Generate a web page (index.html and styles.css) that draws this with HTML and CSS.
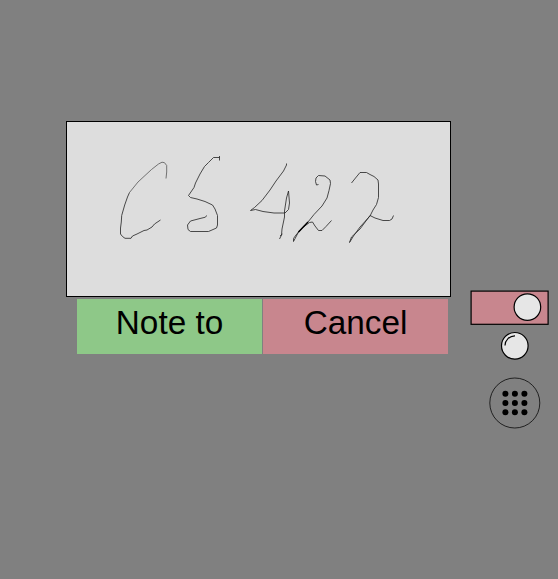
FILE: index.html
```html
<!DOCTYPE html>
<html lang="en">
<head>
<meta charset="utf-8">
<title>Handwritten note</title>
<link rel="stylesheet" href="styles.css">
</head>
<body>
<main class="screen">
  <section class="note">
    <div class="pad">
      <svg class="ink" viewBox="67 122 383 174">
        <path class="faint" d="M166 178.500L166.700 172V165.500L164.500 162.700L162 162.200L158.500 164L151.500 169.500L138 182L129.500 192.500"/>
        <path d="M129.500 192.500L127.500 197L124.700 205L121.700 215.500L121.300 222L120.500 228V234L122.500 236.500L125 238.300H131L132.500 236L137 234L144 230.500L147 230L152 227L154.500 224L160.500 220"/>
        <path d="M219.500 156V160.500M219.500 157.500H213.500L208.500 162.500L204.500 166.500L200 174L195.500 183L194 187.500L188.500 195.500L190.500 197.500L197 199L205 201.500L212.500 205L215 209L217.500 215.500V225L216.500 228L208.500 231.500H190.500L188 229.500L187.500 225L190.500 221L200 218.500L205 217.300L207 215.500"/>
        <path d="M286.500 163.500V165L283.500 171L276 181L270 190L262 200.500L254.500 207.500L250.500 210.500L255.500 209.500L263 211.500L274 213H285L288.500 209.500L289.500 203L288.500 191L286.500 198L284.500 211L284.500 217L282 229L281.500 235L279.500 239M280 236L282.500 234"/>
        <path d="M318.500 184.500L316.500 185L315.500 181.500L316 178L318.500 175.500L325 176L330 180L330.500 183.500L329 190.500L327 198L322 206L314 214.500L308 222L298.500 232L293.500 241.500V238.500L296 235L302 228L309.500 222.500L312.500 222L315 226L318.500 230.500H322L326 226.500L331.500 220.500"/>
        <path class="bold" d="M308 222L298.500 232"/>
        <path d="M351.500 183L355.500 178L360 172.500H366.500L370 174.500L374 176.500L378 180L378.500 184V197.500L376.500 204.500L373 210L370 216L360 227L353.500 236L349.500 242.500L351.500 237L360 229L370 215.500L375 218L383 220.500H389.500L392 219L393.500 215.500"/>
      </svg>
    </div>
    <div class="actions">
      <button class="button accept">Note to</button>
      <button class="button cancel">Cancel</button>
    </div>
  </section>
  <aside class="tools">
    <svg class="switch" viewBox="0 0 80 36">
      <rect class="track" x="1.100" y="1.100" width="77" height="33.200"/>
      <circle class="knob" cx="57.400" cy="17.100" r="13.300"/>
    </svg>
    <svg class="dial" viewBox="0 0 30 30">
      <circle class="knob" cx="14.800" cy="14.800" r="13.300"/>
      <path class="shine" d="M5 14.500A9.800 9.800 0 0 1 15 4.800"/>
    </svg>
    <svg class="menu" viewBox="0 0 52 52">
      <circle class="ring" cx="25.800" cy="26" r="25"/>
      <g>
        <circle cx="16.400" cy="16.700" r="3"/><circle cx="25.900" cy="16.700" r="3"/><circle cx="35.400" cy="16.700" r="3"/>
        <circle cx="16.400" cy="26" r="3"/><circle cx="25.900" cy="26" r="3"/><circle cx="35.400" cy="26" r="3"/>
        <circle cx="16.400" cy="35.300" r="3"/><circle cx="25.900" cy="35.300" r="3"/><circle cx="35.400" cy="35.300" r="3"/>
      </g>
    </svg>
  </aside>
</main>
</body>
</html>
```
FILE: styles.css
```css
* { box-sizing: border-box; }
body { margin: 0; background: #808080; font-family: "Liberation Sans", Arial, sans-serif; }
svg { display: block; }
.screen { display: flex; align-items: flex-start; width: 558px; height: 579px; padding: 121px 0 0 66px; overflow: hidden; }
.note { width: 385px; }
.pad { height: 176px; border: 1px solid #000; background: #ddd; }
.ink { width: 383px; height: 174px; fill: none; stroke: #222; stroke-width: .8; stroke-linejoin: round; }
.faint { stroke: #555; }
.bold { stroke: #000; stroke-width: 1.4; }
.actions { display: flex; gap: 1px; padding: 2px 0 0 11px; }
.button { width: 185px; height: 55px; margin: 0; padding: 0 0 8px; border: 0; font: 33.3px/47px "Liberation Sans", Arial, sans-serif; color: #000; }
.accept { background: #8ec888; }
.cancel { background: #c8868e; }
.tools { display: flex; flex-direction: column; padding: 169px 0 0 19px; }
.switch { width: 80px; height: 36px; }
.dial { width: 30px; height: 30px; margin: 5px 0 0 30px; }
.menu { width: 52px; height: 52px; margin: 16px 0 0 19px; }
.track { fill: #c8868e; stroke: #000; stroke-width: 1.2; }
.knob { fill: #e6e6e6; stroke: #000; stroke-width: 1.2; }
.shine { fill: none; stroke: #000; stroke-width: 1.2; }
.ring { fill: none; stroke: #000; stroke-width: .75; }
```
